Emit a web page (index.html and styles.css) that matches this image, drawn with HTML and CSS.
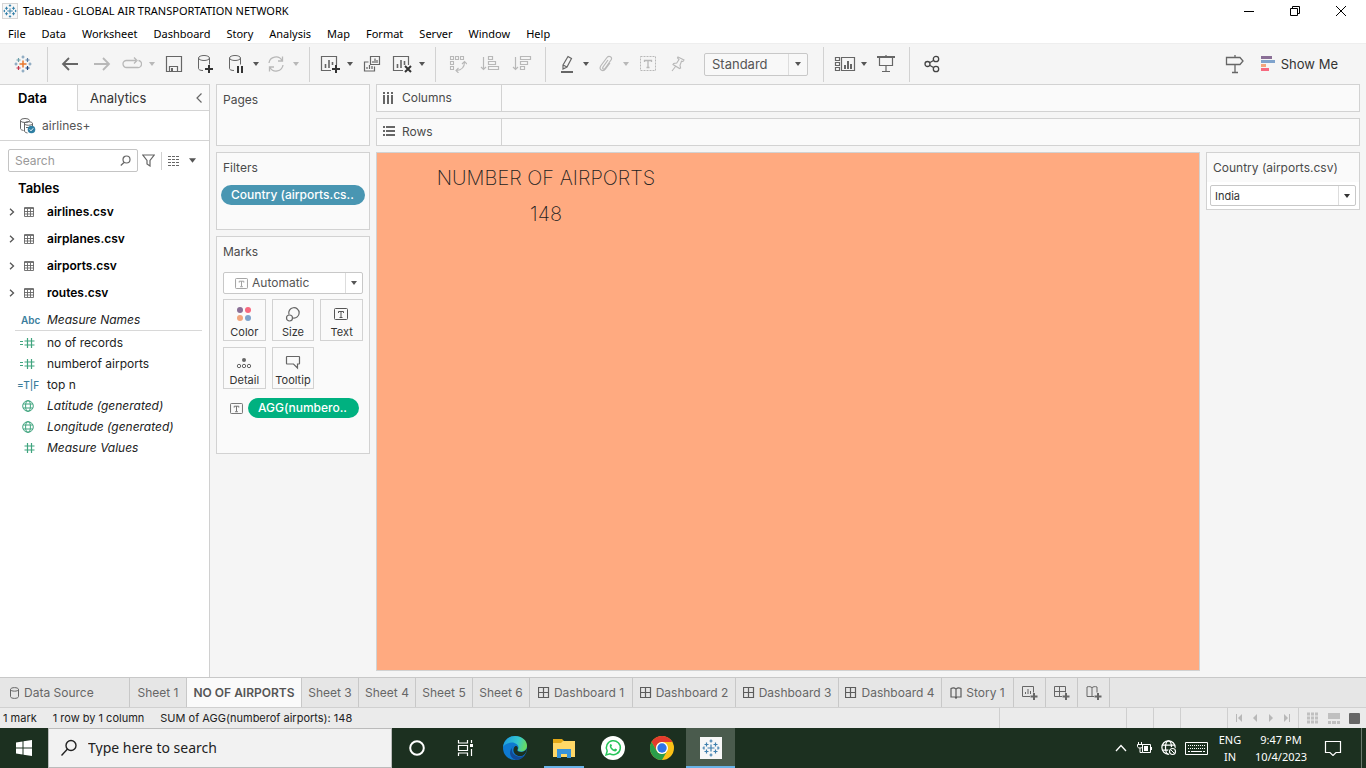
FILE: index.html
```html
<!DOCTYPE html>
<html lang="en">
<head>
<meta charset="utf-8">
<title>Tableau - GLOBAL AIR TRANSPORTATION NETWORK</title>
<link rel="stylesheet" href="styles.css">
</head>
<body>
<svg class="defs" aria-hidden="true">
  <symbol id="caret" viewBox="0 0 6 4"><path d="M0 0h6L3 4z" fill="currentColor"/></symbol>
  <symbol id="mark" viewBox="0 0 18 18"><path d="M9 5.500v7M5.500 9h7M4.500 3.500v4M2.500 5.500h4M13.500 3.500v4M11.500 5.500h4M4.500 10.500v4M2.500 12.500h4M13.500 10.500v4M11.500 12.500h4M9 .5v3M7.500 2h3M9 14.500v3M7.500 16h3M2 9H.5M2 7.500v3M16 7.500v3M16 9h1.500" fill="none" stroke="currentColor" stroke-width="1.200"/></symbol>
  <symbol id="textbox" viewBox="0 0 14 12"><rect x=".5" y=".5" width="13" height="11" rx="1" fill="none" stroke="currentColor"/><path d="M4.500 5V3.500h5V5M7 3.500v5.500M5.500 9.500h3" fill="none" stroke="currentColor"/></symbol>
  <symbol id="grid" viewBox="0 0 10 10"><path d="M.5.5h9v9h-9zM0 1.500h10M0 4.500h10M0 7h10M3.500 2v7M6.500 2v7" stroke="#666" fill="none" stroke-width=".9"/></symbol>
  <symbol id="hash" viewBox="0 0 18 12"><path d="M8.500 1v10M12.500 1v10M5.500 4h10M5.500 8h10" stroke="#3fa47e" stroke-width="1.200" fill="none"/></symbol>
  <symbol id="calchash" viewBox="0 0 18 12"><path d="M8.500 1v10M12.500 1v10M5.500 4h10M5.500 8h10M1 4.500h3M1 7.500h3" stroke="#3fa47e" stroke-width="1.200" fill="none"/></symbol>
  <symbol id="globe" viewBox="0 0 12 12"><g fill="none" stroke="currentColor"><circle cx="6" cy="6" r="5.300"/><ellipse cx="6" cy="6" rx="2.400" ry="5.300"/><path d="M1.200 4h9.600M1.200 8h9.600"/></g></symbol>
  <symbol id="chev" viewBox="0 0 6 8"><path d="M1 .8 4.500 4 1 7.200" fill="none" stroke="#555" stroke-width="1.300"/></symbol>
  <symbol id="dash" viewBox="0 0 12 12"><path d="M.5.5h10v10H.5zM5.500.5v10M.5 5.500h10" fill="none" stroke="#5c5c5c" stroke-width="1.200"/></symbol>
  <symbol id="book" viewBox="0 0 12 12"><path d="M1 1.500c2-1 4-.4 5 .6 1-1 3-1.600 5-.6v8.500H7L6 11.300 5 10H1zM6 2v9" fill="none" stroke="#5c5c5c" stroke-width="1.200"/></symbol>
</svg>

<header class="titlebar">
  <svg class="app-icon" viewBox="0 0 16 16"><rect x=".5" y=".5" width="15" height="15" fill="#f7f7f7" stroke="#d5d5d5"/><use href="#mark" x="1" y="1" width="14" height="14" color="#2d7da8"/></svg>
  <h1 class="title">Tableau - GLOBAL AIR TRANSPORTATION NETWORK</h1>
  <div class="window-buttons">
    <button aria-label="Minimize"><svg width="12" height="12"><path d="M1 6.500h10" stroke="#000"/></svg></button>
    <button aria-label="Restore"><svg width="12" height="12"><path d="M1.500 3.500h7v7h-7zM3.500 3V1.500h7v7H9" fill="none" stroke="#000"/></svg></button>
    <button aria-label="Close"><svg width="12" height="12"><path d="M1 1l10 10M11 1 1 11" stroke="#000"/></svg></button>
  </div>
</header>

<nav class="menubar">
  <button>File</button><button>Data</button><button>Worksheet</button><button>Dashboard</button><button>Story</button><button>Analysis</button><button>Map</button><button>Format</button><button>Server</button><button>Window</button><button>Help</button>
</nav>

<div class="toolbar">
  <div class="tools tools-home">
    <button class="tool" aria-label="Start page"><svg width="18" height="18" fill="none" stroke-width="1.200"><path d="M9 5.500v7M5.500 9h7" stroke="#e8762c" stroke-width="1.500"/><path d="M4.500 3v4M2.500 5h4" stroke="#6d9fab"/><path d="M13.500 3v4M11.500 5h4" stroke="#5b7fa5"/><path d="M4.500 11v4M2.500 13h4" stroke="#c5354b"/><path d="M13.500 11v4M11.500 13h4" stroke="#1f447e"/><path d="M9 .5v3M7.500 2h3M2 7.500v3M.5 9h3M9 14.500v3M7.500 16h3M16 7.500v3M14.500 9h3" stroke="#7b9db8"/></svg></button>
  </div>
  <div class="tools">
    <button class="tool" aria-label="Undo"><svg width="18" height="18"><path d="M17 9H2M8 3 2 9l6 6" fill="none" stroke="#666" stroke-width="1.800"/></svg></button>
    <button class="tool off" aria-label="Redo"><svg width="18" height="18"><path d="M1 9h15M10 3l6 6-6 6" fill="none" stroke="currentColor" stroke-width="1.800"/></svg></button>
    <button class="tool slim off" aria-label="Replay"><svg width="20" height="16"><path d="M9 11.500H4.500a3.500 3.500 0 0 1 0-7H14M12 1.500l3 3-3 3M16.500 4.500a3.500 3.500 0 0 1-1 7H8" fill="none" stroke="currentColor" stroke-width="1.300"/></svg></button>
    <button class="more off" aria-label="Replay options"><svg><use href="#caret"/></svg></button>
    <button class="tool" aria-label="Save"><svg width="18" height="18"><path d="M1.500 1.500h15v15h-15zM4.500 16v-4.500h8V16" fill="none" stroke="#666" stroke-width="1.200"/><path d="M6 13h2v3H6z" fill="#666"/></svg></button>
    <button class="tool" aria-label="New data source"><svg width="18" height="20" fill="none" stroke="#666"><ellipse cx="7" cy="4" rx="5.500" ry="2.500"/><path d="M1.500 4v10.500c0 1 1.500 2 4.500 2M12.500 4v6.500"/><path d="M12 11v8M8 15h8" stroke="#333" stroke-width="2"/></svg></button>
    <button class="tool slim" aria-label="Pause updates"><svg width="18" height="20" fill="none" stroke="#666"><ellipse cx="8" cy="4" rx="5.500" ry="2.500"/><path d="M2.500 4v10.500c0 1 1.500 2 4.500 2M13.500 4v6.500"/><path d="M11 12v7M15 12v7" stroke="#333" stroke-width="2"/></svg></button>
    <button class="more" aria-label="Pause options"><svg><use href="#caret"/></svg></button>
    <button class="tool slim off" aria-label="Run update"><svg width="18" height="18" fill="none" stroke="currentColor" stroke-width="1.300"><path d="M2 8a7 7 0 0 1 13-2.500M16 10a7 7 0 0 1-13 2.500M15.500 1.500v4.500H11M2.500 16.500V12H7"/></svg></button>
    <button class="more off" aria-label="Update options"><svg><use href="#caret"/></svg></button>
  </div>
  <div class="tools">
    <button class="tool slim" aria-label="New worksheet"><svg width="20" height="20" fill="none" stroke="#666" stroke-width="1.200"><path d="M11 16.500H1.500v-14h15V11"/><path d="M5.500 14v-4M9 14V6M12.500 11V8" stroke-width="1.600"/><path d="M16 11v8M12 15h8" stroke="#333" stroke-width="2"/></svg></button>
    <button class="more" aria-label="New sheet options"><svg><use href="#caret"/></svg></button>
    <button class="tool" aria-label="Duplicate"><svg width="18" height="18" fill="none" stroke="#666" stroke-width="1.200"><path d="M7.500 1.500h9v8h-9zM5.500 7H1.500v9h10v-4.500"/><path d="M10 8V6M12 8V3.500M14 8V5M4 14v-2M6.500 14v-4M9 14v-3"/></svg></button>
    <button class="tool slim" aria-label="Clear sheet"><svg width="20" height="20" fill="none" stroke="#666" stroke-width="1.200"><path d="M11 16.500H1.500v-14h15V11"/><path d="M5.500 14v-4M9 14V6M12.500 11V7" stroke-width="1.600"/><path d="m13 12 6 6M19 12l-6 6" stroke="#333" stroke-width="2"/></svg></button>
    <button class="more" aria-label="Clear options"><svg><use href="#caret"/></svg></button>
  </div>
  <div class="tools">
    <button class="tool off" aria-label="Swap rows and columns"><svg width="18" height="18" fill="none" stroke="currentColor" stroke-width="1.100"><path d="M1.500 1.500h3v3h-3zM6.500 1.500h3v3h-3zM11.500 1.500h3v3h-3zM1.500 6.500h3v3h-3zM1.500 11.500h3v3h-3z"/><path d="M15.500 7c0 5-2 8-8 8.500M13 9l2.500-2.500L18 9M9.500 13 7 15.500 9.500 18"/></svg></button>
    <button class="tool off" aria-label="Sort ascending"><svg width="20" height="18" fill="none" stroke="currentColor" stroke-width="1.200"><path d="M3.500 2v12M1 12l2.500 2.500L6 12M8.500 1.500h4v3h-4zM8.500 6.500h7v3h-7zM8.500 11.500h10v3h-10z"/></svg></button>
    <button class="tool off" aria-label="Sort descending"><svg width="20" height="18" fill="none" stroke="currentColor" stroke-width="1.200"><path d="M3.500 2v12M1 12l2.500 2.500L6 12M8.500 1.500h10v3h-10zM8.500 6.500h7v3h-7zM8.500 11.500h4v3h-4z"/></svg></button>
  </div>
  <div class="tools tools-format">
    <button class="tool slim" aria-label="Highlight"><svg width="18" height="18" fill="none" stroke="#666" stroke-width="1.200"><path d="m6 10 5-8.500 3.500 2L10 12l-4 2zM6 10l4 2"/><path d="M4 17h12" stroke-width="2"/></svg></button>
    <button class="more" aria-label="Highlight options"><svg><use href="#caret"/></svg></button>
    <button class="tool slim off" aria-label="Group members"><svg width="16" height="18" fill="none" stroke="currentColor" stroke-width="1.200"><path d="m10 5-5 7c-1 2 1 3 2 1.500l6-8.500c2-3-2-5-4-2.500L3 10.500c-3 4 2 7 4.500 3.500L12 8"/></svg></button>
    <button class="more off" aria-label="Group options"><svg><use href="#caret"/></svg></button>
    <button class="tool off" aria-label="Show mark labels"><svg width="18" height="18" fill="none" stroke="currentColor"><path d="M1.500 1.500h15v14h-15z" stroke-dasharray="2 1"/><path d="M5.500 7V5.500h7V7M9 5.500V12M7.500 12.500h3" stroke-width="1.300"/></svg></button>
    <button class="tool slim off" aria-label="Fix axes"><svg width="16" height="18" fill="none" stroke="currentColor" stroke-width="1.100"><path d="m8 2 6 3-1 1.500-1.500-.3-1.500 4 .6 2.800-1 .5L3 9.500l.7-1 3-.5L9 4.500 7.500 3zM5.500 11.500 2 16"/></svg></button>
    <label class="combo fit"><select aria-label="Fit"><option>Standard</option></select><svg><use href="#caret"/></svg></label>
  </div>
  <div class="tools">
    <button class="tool slim" aria-label="Show cards"><svg width="24" height="16" fill="none" stroke="#666" stroke-width="1.200"><path d="M3.500 1.500h4v3h-4zM3.500 6.500h4v3h-4zM3.500 11.500h4v3h-4zM9.500 1.500h13v13h-13z"/><path d="M13 13v-4M16 13V5M19 13V8" stroke-width="2"/></svg></button>
    <button class="more" aria-label="Card options"><svg><use href="#caret"/></svg></button>
    <button class="tool" aria-label="Presentation mode"><svg width="18" height="18" fill="none" stroke="#666" stroke-width="1.200"><path d="M0 2h18" stroke-width="2"/><path d="M2.500 2v8.500h13V2M9 11v5M5 16.500h8M9 0v2"/></svg></button>
  </div>
  <div class="tools tools-last">
    <button class="tool" aria-label="Share"><svg width="18" height="18" fill="none" stroke="#444" stroke-width="1.300"><circle cx="4.500" cy="9" r="2.500"/><circle cx="13" cy="4" r="2.700"/><circle cx="13" cy="14" r="2.700"/><path d="m7 7.500 3.500-2M7 10.500l3.500 2"/></svg></button>
  </div>
  <div class="tools tools-right">
    <button class="tool" aria-label="Guide"><svg width="20" height="20" fill="none" stroke="#666" stroke-width="1.300"><path d="M1.500 3.500H15l3 3.500-3 3.500H1.500zM10 1v2.500M10 10.500V18M7 18.500h6"/></svg></button>
    <button class="show-me"><svg width="14" height="16"><path d="M0 0h11v3H0z" fill="#8a6f96"/><path d="M0 4h14v3H0z" fill="#7fa3cc"/><path d="M0 8h5v3H0z" fill="#f2a57d"/><path d="M0 12h8v3H0z" fill="#f7697f"/></svg>Show Me</button>
  </div>
</div>

<main class="workspace">
  <aside class="data-pane">
    <div class="pane-tabs">
      <button class="pane-tab current">Data</button>
      <button class="pane-tab">Analytics<svg width="8" height="12"><path d="M6.500 1.500 2 6l4.500 4.500" fill="none" stroke="#666" stroke-width="1.200"/></svg></button>
    </div>
    <button class="source"><svg width="18" height="18" fill="none" stroke="#666"><ellipse cx="6" cy="3.500" rx="4.500" ry="2"/><path d="M1.500 3.500v8c0 1 1 1.500 3 2M5.500 6v8c0 1 1 1.500 3 2M13.500 6.500v3"/><ellipse cx="9.500" cy="6.500" rx="4" ry="1.800"/><path d="M7 10.500h3"/><circle cx="12.500" cy="12.500" r="3.800" fill="#2f7fa3" stroke="none"/><path d="m10.800 12.500 1.200 1.300 2.200-2.500" stroke="#fff"/></svg>airlines+</button>
    <div class="find">
      <label class="search-box"><input type="text" placeholder="Search" aria-label="Search fields"><svg width="11" height="11" fill="none" stroke="#666" stroke-width="1.200"><circle cx="6.500" cy="4.500" r="3.500"/><path d="M4 7.500.8 10.500"/></svg></label>
      <button aria-label="Filter fields"><svg width="13" height="13"><path d="M.8 1h11.400L8 6.500V12L5 10V6.500z" fill="none" stroke="#666" stroke-width="1.200"/></svg></button>
      <button class="view-as" aria-label="View as"><svg width="12" height="10"><path d="M0 .5h12M0 3.500h12M0 6.500h12M0 9.500h12" stroke="#666" stroke-dasharray="3 1"/></svg><svg class="view-caret"><use href="#caret"/></svg></button>
    </div>
    <h2 class="tables-title">Tables</h2>
    <ul class="tables">
      <li><button><svg class="chev"><use href="#chev"/></svg><svg class="grid"><use href="#grid"/></svg>airlines.csv</button></li>
      <li><button><svg class="chev"><use href="#chev"/></svg><svg class="grid"><use href="#grid"/></svg>airplanes.csv</button></li>
      <li><button><svg class="chev"><use href="#chev"/></svg><svg class="grid"><use href="#grid"/></svg>airports.csv</button></li>
      <li><button><svg class="chev"><use href="#chev"/></svg><svg class="grid"><use href="#grid"/></svg>routes.csv</button></li>
    </ul>
    <ul class="fields dimensions"><li class="generated"><span class="kind">Abc</span>Measure Names</li></ul>
    <ul class="fields">
      <li><span class="kind"><svg width="18" height="12"><use href="#calchash"/></svg></span>no of records</li>
      <li><span class="kind"><svg width="18" height="12"><use href="#calchash"/></svg></span>numberof airports</li>
      <li><span class="kind boolean">=T|F</span>top n</li>
      <li class="generated"><span class="kind geo"><svg width="12" height="12"><use href="#globe"/></svg></span>Latitude (generated)</li>
      <li class="generated"><span class="kind geo"><svg width="12" height="12"><use href="#globe"/></svg></span>Longitude (generated)</li>
      <li class="generated"><span class="kind"><svg width="18" height="12"><use href="#hash"/></svg></span>Measure Values</li>
    </ul>
  </aside>

  <div class="cards">
    <section class="card pages"><h2>Pages</h2></section>
    <section class="card filters"><h2>Filters</h2><button class="pill blue">Country (airports.cs..</button></section>
    <section class="card marks">
      <h2>Marks</h2>
      <label class="combo mark-type"><svg class="type-icon"><use href="#textbox"/></svg><select aria-label="Mark type"><option>Automatic</option></select><svg><use href="#caret"/></svg></label>
      <div class="mark-buttons">
        <button><svg width="16" height="16"><circle cx="4" cy="4" r="3" fill="#8a6f96"/><circle cx="12" cy="4" r="3" fill="#f7697f"/><circle cx="4" cy="12" r="3" fill="#f2a57d"/><circle cx="12" cy="12" r="3" fill="#7fa3cc"/></svg>Color</button>
        <button><svg width="16" height="16" fill="none" stroke="#666" stroke-width="1.200"><path d="M4 8.500A5.200 5.200 0 1 1 8 12"/><circle cx="4.500" cy="12" r="3"/></svg>Size</button>
        <button><svg width="16" height="16" color="#555"><use href="#textbox" y="2" width="14" height="12"/></svg>Text</button>
        <button><svg width="16" height="16" fill="none" stroke="#666"><circle cx="8" cy="6" r="2" fill="#666" stroke="none"/><circle cx="3" cy="12" r="1.700"/><circle cx="8" cy="12" r="1.700"/><circle cx="13" cy="12" r="1.700"/></svg>Detail</button>
        <button><svg width="16" height="16"><path d="M2 2.500h12a.5.5 0 0 1 .5.500v6.500a.5.500 0 0 1-.5.500h-1.500v4l-4-4H2a.5.500 0 0 1-.5-.5V3a.5.500 0 0 1 .5-.5z" fill="none" stroke="#666" stroke-width="1.200"/></svg>Tooltip</button>
      </div>
      <div class="mark-pill"><svg class="type-icon"><use href="#textbox"/></svg><button class="pill green">AGG(numbero..</button></div>
    </section>
  </div>

  <div class="viz">
    <div class="shelf"><span class="shelf-name"><svg width="12" height="12"><path d="M1 0v2M5 0v2M9 0v2M1 3v9M5 3v9M9 3v9" stroke="#666" stroke-width="2"/></svg>Columns</span></div>
    <div class="shelf"><span class="shelf-name"><svg width="12" height="12"><path d="M0 1h2M0 5h2M0 9h2M3 1h9M3 5h9M3 9h9" stroke="#666" stroke-width="2"/></svg>Rows</span></div>
    <div class="view">
      <section class="sheet"><div class="sheet-text"><h2>NUMBER OF AIRPORTS</h2><p>148</p></div></section>
      <section class="quick-filter"><h2 id="country">Country (airports.csv)</h2><label class="combo country"><select aria-labelledby="country"><option>India</option></select><svg><use href="#caret"/></svg></label></section>
    </div>
  </div>
</main>

<nav class="sheet-tabs">
  <button class="data-source"><svg width="10" height="12"><path d="M.5 2.500v7c0 2.500 8 2.500 8 0v-7c0-2.500-8-2.500-8 0zc0 2.200 8 2.200 8 0" fill="none" stroke="#666"/></svg>Data Source</button>
  <button>Sheet 1</button><button class="active">NO OF AIRPORTS</button><button>Sheet 3</button><button>Sheet 4</button><button>Sheet 5</button><button>Sheet 6</button>
  <button class="dash"><svg width="12" height="12"><use href="#dash"/></svg>Dashboard 1</button>
  <button class="dash"><svg width="12" height="12"><use href="#dash"/></svg>Dashboard 2</button>
  <button class="dash"><svg width="12" height="12"><use href="#dash"/></svg>Dashboard 3</button>
  <button class="dash"><svg width="12" height="12"><use href="#dash"/></svg>Dashboard 4</button>
  <button class="story"><svg width="12" height="12"><use href="#book"/></svg>Story 1</button>
  <button class="new" aria-label="New worksheet"><svg width="16" height="16" fill="none" stroke="#666"><path d="M8 11.500H.5V1.500h11v6M3.500 9V7M6 9V4M8.500 9V6"/><path d="M12 8v7M8.500 11.500h7" stroke-width="2"/></svg></button>
  <button class="new" aria-label="New dashboard"><svg width="16" height="16" fill="none" stroke="#666"><path d="M8 11.500H.5V1.500h11v6M5.500 1.500v10M.5 6.500h11"/><path d="M12 8v7M8.500 11.500h7" stroke-width="2"/></svg></button>
  <button class="new" aria-label="New story"><svg width="16" height="16" fill="none" stroke="#666"><path d="M8 11.500H1V2c2-.8 4-.3 5 .7 1-1 3-1.500 5-.7v5.500M6 2.500v9"/><path d="M12 8v7M8.500 11.500h7" stroke-width="2"/></svg></button>
</nav>

<footer class="status">
  <span>1 mark</span><span>1 row by 1 column</span><span>SUM of AGG(numberof airports): 148</span>
  <div class="status-cells">
    <i class="cell wide"></i><i class="cell"></i><i class="cell"></i><i class="cell mid"></i>
    <div class="pager">
      <button aria-label="First"><svg width="8" height="8"><path d="M1 0h1v8H1zM7 0v8L3 4z"/></svg></button>
      <button aria-label="Previous"><svg width="8" height="8"><path d="M6 0v8L2 4z"/></svg></button>
      <button aria-label="Next"><svg width="8" height="8"><path d="M2 0v8l4-4z"/></svg></button>
      <button aria-label="Last"><svg width="8" height="8"><path d="M6 0h1v8H6zM1 0v8l4-4z"/></svg></button>
    </div>
    <div class="sorter">
      <button aria-label="Sheet sorter"><svg width="12" height="12"><path d="M0 2h12M0 6h12M0 10h12" stroke="#c0c0c0" stroke-width="3" stroke-dasharray="3 1"/></svg></button>
      <button aria-label="Filmstrip"><svg width="12" height="12"><path d="M0 1h12v6H0zM0 9h3v3H0zM4 9h4v3H4zM9 9h3v3H9z" fill="#c0c0c0"/></svg></button>
      <button aria-label="Tabs"><svg width="12" height="12"><rect y="1" width="11" height="11" rx="1" fill="#666"/></svg></button>
    </div>
  </div>
</footer>

<div class="taskbar">
  <button class="start" aria-label="Start"><svg width="16" height="16" fill="#fff"><path d="M0 2.500 6.500 1.500V7.500H0zM7.500 1.300 16 0v7.500H7.500zM0 8.500h6.500v6L0 13.600zM7.500 8.500H16V16l-8.500-1.200z"/></svg></button>
  <label class="task-search"><svg width="18" height="18" fill="none" stroke="#222" stroke-width="1.400"><circle cx="11" cy="6.500" r="5"/><path d="m7.500 10-6 6.500"/></svg><input type="text" placeholder="Type here to search" aria-label="Type here to search"></label>
  <button class="task" aria-label="Cortana"><svg width="18" height="18"><circle cx="9" cy="9" r="6.800" fill="none" stroke="#fff" stroke-width="2"/></svg></button>
  <button class="task" aria-label="Task view"><svg width="18" height="18" fill="none" stroke="#fff" stroke-width="1.200"><path d="M1.500 1v3h9V1M1.500 17v-3h9v3M1.500 6.500h9v5h-9zM14.500 1v3M14.500 10v7"/><path d="M13 5h3v3h-3z" fill="#fff" stroke="none"/></svg></button>
  <button class="task" aria-label="Microsoft Edge"><svg width="24" height="24" viewBox="0 0 24 24"><defs><linearGradient id="e1" x1="0" x2="1" y1=".3" y2=".5"><stop stop-color="#1c9be0"/><stop offset=".6" stop-color="#35c7cf"/><stop offset="1" stop-color="#6bdc5a"/></linearGradient></defs><circle cx="12" cy="12" r="12" fill="#0e7ad1"/><path d="M0 11C1 4 6 0 12 0c7 0 12 4.500 12 9.500 0 4-3 6-6 6-2.500 0-4-1-3-2.200C17 10 13 6.500 9 6.500 4.500 6.500 1 9 0 11z" fill="url(#e1)"/><path d="M9 12c-1 6 4 9 9 8.500 2-.3 3.500-1 4.300-1.800A12 12 0 0 1 13 24C6 22 5 14 11 10c-1 .5-1.700 1-2 2z" fill="#124a96"/><path d="M13.500 10c1.500 1 1.700 2.500 1 3.500-.8 1.300.8 2.600 4 2.500 2 0 4.200-1.300 5.300-3.500.2 3-2 7-5.300 7.500-6 .8-9.500-4-7.500-8.500.5-1 1.500-1.700 2.500-1.500z" fill="#1c3020"/></svg></button>
  <button class="task running" aria-label="File Explorer"><svg width="22" height="20"><path d="M0 1h9l2 2h11v4H0z" fill="#e3a817"/><path d="M0 5h8l2-2h12v16H0z" fill="#ffd867"/><path d="M4 11h14v9h-4v-4H8v4H4z" fill="#3793d9"/></svg></button>
  <button class="task" aria-label="WhatsApp"><svg width="24" height="24" viewBox="0 0 24 24"><circle cx="12" cy="12" r="12" fill="#fff"/><path d="m5 19 1.200-4A7 7 0 1 1 9 17.800z" fill="none" stroke="#27c45a" stroke-width="1.500"/><path d="M9 8.500c.5-.8 1.200-.7 1.500 0l.5 1.200-.8 1.100c.6 1.200 1.600 2.100 2.900 2.600l1.100-1 1.600.8c.5.400-.1 2-1.500 2.200C11.500 15.500 7.700 11.500 9 8.500z" fill="#27c45a"/></svg></button>
  <button class="task" aria-label="Google Chrome"><svg width="24" height="24" viewBox="0 0 24 24"><circle cx="12" cy="12" r="12" fill="#fbc116"/><path d="M1.600 6A12 12 0 0 1 22.400 6H12a6 6 0 0 0-5.200 9z" fill="#e33b2e"/><path d="M1.600 6A12 12 0 0 0 12 24l5.200-9A6 6 0 0 1 6.800 15z" fill="#2b9e4a"/><circle cx="12" cy="12" r="6" fill="#fff"/><circle cx="12" cy="12" r="4.700" fill="#2f74e8"/></svg></button>
  <button class="task current" aria-label="Tableau"><svg width="22" height="22"><rect width="22" height="22" fill="#f7f7f7"/><use href="#mark" x="2" y="2" width="18" height="18" color="#3e7fae"/></svg></button>
  <div class="tray">
    <button class="tray-icon" aria-label="Hidden icons"><svg width="12" height="8"><path d="M1 7l5-5.500L11 7" fill="none" stroke="#fff" stroke-width="1.300"/></svg></button>
    <button class="tray-icon" aria-label="Battery"><svg width="16" height="12" fill="none" stroke="#fff"><path d="M5.500 2.500h8v8h-8zM14.500 5v3M1.500 0v2M4.500 0v2M.5 2.500h5v2c0 1-1 1.500-2.500 1.500S.5 5.500.5 4.500zM3 6v4.500h2.500"/><path d="M7 4h4v5H7z" fill="#fff" stroke="none"/></svg></button>
    <button class="tray-icon" aria-label="Network"><svg width="16" height="16" color="#fff"><use href="#globe" width="15" height="15"/><circle cx="11.500" cy="11.500" r="4.500" fill="#1c3020"/><circle cx="11.500" cy="11.500" r="3" fill="none" stroke="#fff" stroke-width="1.200"/><path d="m9.500 9.500 4 4" stroke="#fff"/></svg></button>
    <button class="tray-icon keys" aria-label="Keyboard"><svg width="23" height="13" fill="none" stroke="#fff"><path d="M.5.5h22v12H.5z"/><path d="M3 3.500h17M3 6.500h17" stroke-dasharray="1 1"/><path d="M3 9.500h2M6 9.500h11M18 9.500h2"/></svg></button>
    <button class="lang">ENG<br>IN</button>
    <button class="clock">9:47 PM<br>10/4/2023</button>
    <button class="notify" aria-label="Notifications"><svg width="18" height="16"><path d="M1.500 1.500h15v11H12L9 15.500l-3-3H1.500z" fill="none" stroke="#fff" stroke-width="1.200"/></svg></button>
    <i class="peek"></i>
  </div>
</div>
</body>
</html>
```

FILE: styles.css
```css
* { box-sizing: border-box; }
body {
  margin: 0;
  min-height: 100vh;
  display: flex;
  flex-direction: column;
  background: #f5f5f5;
  color: #4a4a4a;
  font: 12px/16px Inter, "Liberation Sans", sans-serif;
}
button, input, select { font: inherit; color: inherit; }
button { background: none; border: 0; padding: 0; display: flex; align-items: center; white-space: nowrap; }
h1, h2, p, ul { margin: 0; padding: 0; font: inherit; list-style: none; }
svg { display: block; flex: none; }
.defs { position: absolute; width: 0; height: 0; }

/* Window frame */
.titlebar, .menubar { background: #fff; color: #000; font-family: "Noto Sans", "Open Sans", sans-serif; font-size: 11px; display: flex; align-items: center; }
.titlebar { height: 22px; padding: 0 2px; gap: 5px; }
.app-icon { width: 16px; height: 16px; }
.title { flex: 1; }
.window-buttons { display: flex; }
.window-buttons button { width: 46px; height: 22px; justify-content: center; }
.menubar { height: 21px; padding: 2px 0 0 8px; gap: 16px; }

/* Toolbar */
.toolbar { height: 41px; display: flex; align-items: center; border-top: 1px solid #eee; }
.tools { height: 35px; padding: 0 7px 0 6px; display: flex; align-items: center; border-right: 1px solid #d2d2d2; }
.tools-home { width: 48px; padding: 0 7px; }
.tools-format { padding-right: 15px; }
.tools-last, .tools-right { border-right: 0; }
.tools-right { margin-left: auto; padding-right: 28px; gap: 10px; }
.tool { width: 32px; height: 32px; justify-content: center; }
.slim { width: 28px; }
.more { width: 12px; height: 32px; justify-content: center; color: #555; }
.more svg, .combo > svg:last-child { width: 6px; height: 4px; }
.off { color: #b8b8b8; }
.show-me { gap: 6px; font-size: 13px; color: #333; }

.combo { display: flex; align-items: center; background: #fff; border: 1px solid #c8c8c8; border-radius: 2px; color: #555; }
.combo select { flex: 1; min-width: 0; appearance: none; border: 0; border-right: 1px solid #ddd; background: none; height: 100%; padding: 0 4px; outline: 0; }
.combo > svg:last-child { margin: 0 5px; }
.fit { width: 104px; height: 23px; margin-left: 12px; font-size: 13px; background: #f8f8f8; }
.fit select { padding-left: 7px; }
.fit > svg:last-child { margin: 0 6px; }

/* Workspace */
.workspace { flex: 1; display: grid; grid-template-columns: 210px 154px minmax(0, 1fr); column-gap: 6px; padding-right: 6px; border-bottom: 1px solid #c8c8c8; }
.data-pane { background: #fff; border-right: 1px solid #d0d0d0; color: #222; }
.pane-tabs { display: flex; height: 27px; }
.pane-tab { font-size: 13px; color: #333; border-top: 1px solid #d4d4d4; }
.pane-tab.current { width: 77px; padding-left: 18px; font-weight: 600; color: #000; }
.pane-tab:not(.current) { flex: 1; padding: 0 6px 0 12px; justify-content: space-between; background: #fafafa; border-left: 1px solid #d4d4d4; border-bottom: 1px solid #d4d4d4; }
.source { width: 100%; height: 30px; padding-left: 19px; gap: 5px; border-bottom: 1px solid #d4d4d4; color: #555; }
.find { display: flex; align-items: center; padding: 8px 12px 0 8px; gap: 4px; }
.search-box { width: 130px; height: 23px; display: flex; align-items: center; border: 1px solid #c4c4c4; border-radius: 2px; padding: 0 6px; }
.search-box input { flex: 1; min-width: 0; border: 0; outline: 0; padding: 0; }
::placeholder { color: #999; opacity: 1; }
.view-as { margin-left: 2px; border-left: 1px solid #d0d0d0; height: 18px; padding-left: 6px; gap: 9px; }
.view-caret { width: 7px; height: 5px; color: #555; }
.tables-title { padding: 8px 0 2px 18px; font-size: 13px; font-weight: 600; color: #000; }
.tables button { height: 27px; width: 100%; padding-left: 9px; font-weight: 600; color: #000; }
.chev { width: 6px; height: 8px; margin-right: 9px; }
.grid { width: 10px; height: 10px; margin-right: 13px; }
.fields li { display: flex; align-items: center; height: 21px; }
.kind { width: 47px; padding-left: 19px; font: 600 10px/12px Inter, sans-serif; color: #3a7d9c; flex: none; }
.kind.geo { padding-left: 22px; color: #3fa47e; }
.kind.boolean { padding-left: 17px; font-weight: 500; }
.generated { font-style: italic; }
.dimensions { margin: 3px 7px 1px 15px; border-bottom: 1px solid #d8d8d8; }
.dimensions .kind { width: 32px; padding-left: 6px; }

.cards { display: flex; flex-direction: column; gap: 6px; }
.card { border: 1px solid #d2d2d2; background: #fafafa; padding: 7px 6px; }
.pages { height: 62px; }
.filters { height: 78px; padding: 7px 4px; }
.filters h2 { padding-left: 2px; }
.filters .pill { margin-top: 9px; width: 144px; }
.marks { height: 218px; }
.pill { height: 20px; border-radius: 10px; color: #fff; font-weight: 500; padding: 0 10px; }
.blue { background: #4996b2; }
.green { background: #00b180; width: 111px; }
.mark-type { width: 140px; height: 22px; margin: 12px 0 5px; padding-left: 11px; }
.mark-type select { height: 20px; }
.type-icon { width: 13px; height: 11px; color: #666; }
.mark-type .type-icon { color: #999; }
.mark-buttons { display: grid; grid-template-columns: repeat(3, 1fr); gap: 6px; }
.mark-buttons button { height: 42px; flex-direction: column; justify-content: flex-end; gap: 2px; border: 1px solid #d2d2d2; font-size: 11px; color: #333; }
.mark-pill { display: flex; align-items: center; gap: 5px; padding: 9px 0 0 7px; }

.viz { display: flex; flex-direction: column; gap: 6px; padding-bottom: 6px; }
.shelf { height: 28px; border: 1px solid #d2d2d2; background: #fafafa; }
.shelf-name { width: 125px; height: 100%; display: flex; align-items: center; gap: 7px; padding-left: 6px; border-right: 1px solid #d2d2d2; }
.view { flex: 1; display: flex; align-items: stretch; gap: 6px; }
.sheet { flex: 1; border: 1px solid #d2d2d2; background: #ffaa80; }
.sheet-text { width: 338px; padding-top: 7px; text-align: center; font-size: 20px; line-height: 36px; font-weight: 200; color: #222; }
.quick-filter { width: 154px; align-self: flex-start; border: 1px solid #d2d2d2; background: #fff; }
.quick-filter h2 { padding: 7px 6px 6px; background: #fafafa; white-space: nowrap; }
.country { height: 21px; margin: 3px; font-size: 11px; color: #333; }

/* Sheet tabs */
.sheet-tabs { height: 30px; display: flex; background: #e6e6e6; border-bottom: 1px solid #d0d0d0; color: #666; }
.sheet-tabs button { width: 57px; justify-content: center; border-right: 1px solid #c8c8c8; gap: 4px; }
.sheet-tabs .data-source { width: 130px; justify-content: flex-start; padding-left: 10px; }
.sheet-tabs .active { width: 115px; background: #fafafa; font-weight: 600; color: #555; }
.sheet-tabs .dash { width: 103px; }
.sheet-tabs .story { width: 72px; }
.sheet-tabs .new { width: 32px; }

.status { height: 20px; display: flex; align-items: center; gap: 16px; padding-left: 3px; background: #ebebeb; color: #222; font-size: 11px; white-space: nowrap; }
.status-cells { margin-left: auto; display: flex; align-self: stretch; }
.cell, .pager, .sorter { border-left: 1px solid #cfcfcf; width: 27px; }
.wide { width: 127px; }
.mid { width: 47px; }
.pager { width: 71px; display: flex; align-items: center; gap: 8px; padding-left: 7px; fill: #b8b8b8; }
.sorter { width: 68px; display: flex; align-items: center; gap: 9px; padding-left: 8px; }

/* Taskbar */
.taskbar { height: 40px; display: flex; background: #1c3020; color: #fff; font-family: "Noto Sans", "Open Sans", sans-serif; }
.taskbar button { justify-content: center; }
.start { width: 48px; }
.task-search { width: 344px; display: flex; align-items: center; gap: 10px; padding-left: 11px; background: #f2f2f2; border: 1px solid #bbb; color: #222; }
.task-search input { border: 0; outline: 0; background: none; padding: 0; font-size: 14px; flex: 1; }
.task-search ::placeholder { color: #222; }
.task { width: 49px; }
.running { background: linear-gradient(#69b3e8, #69b3e8) center bottom / 40px 2px no-repeat; }
.task.current { background: #4a5b4d; border-bottom: 2px solid #69b3e8; border-top: 2px solid #4a5b4d; }
.tray { margin-left: auto; display: flex; align-items: stretch; }
.tray-icon { width: 24px; }
.keys { width: 31px; }
.lang { width: 36px; }
.clock { width: 66px; }
.lang, .clock { display: block; text-align: center; font-size: 11px; line-height: 17px; }
.notify { width: 38px; }
.peek { width: 1px; margin: 0 4px 0 9px; background: #6b7a6e; }
```
